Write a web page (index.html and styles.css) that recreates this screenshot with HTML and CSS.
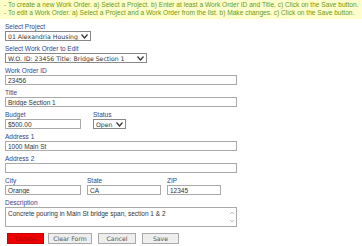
FILE: index.html
```html
<!DOCTYPE html>
<html>
<head>
    <title>Work Orders</title>
    <link rel="stylesheet" href="styles.css">
</head>
<body>
    <div class="help">
        - To create a new Work Order. a) Select a Project. b) Enter at least a Work Order ID and Title. c) Click on the Save button.<br>
        - To edit a Work Order. a) Select a Project and a Work Order from the list. b) Make changes. c) Click on the Save button.
    </div>
    <form class="wo-form">
        <label class="lbl">Select Project</label>
        <select class="sel fld project">
            <option>01 Alexandria Housing</option>
        </select>
        <label class="lbl">Select Work Order to Edit</label>
        <select class="sel fld order">
            <option>W.O. ID: 23456 Title: Bridge Section 1</option>
        </select>
        <label class="lbl">Work Order ID</label>
        <input type="text" class="txt fld wide" value="23456">
        <label class="lbl">Title</label>
        <input type="text" class="txt fld wide" value="Bridge Section 1">
        <div class="row">
            <div class="col">
                <label class="lbl">Budget</label>
                <input type="text" class="txt fld short" value="$500.00">
            </div>
            <div class="col status">
                <label class="lbl">Status</label>
                <select class="sel fld small">
                    <option>Open</option>
                </select>
            </div>
        </div>
        <label class="lbl">Address 1</label>
        <input type="text" class="txt fld wide" value="1000 Main St">
        <label class="lbl">Address 2</label>
        <input type="text" class="txt fld wide" value="">
        <div class="row">
            <div class="col">
                <label class="lbl">City</label>
                <input type="text" class="txt fld short" value="Orange">
            </div>
            <div class="col">
                <label class="lbl">State</label>
                <input type="text" class="txt fld state" value="CA">
            </div>
            <div class="col">
                <label class="lbl">ZIP</label>
                <input type="text" class="txt fld zip" value="12345">
            </div>
        </div>
        <label class="lbl">Description</label>
        <div class="desc-box">
            <textarea class="txt wide desc">Concrete pouring in Main St bridge span, section 1 &amp; 2</textarea>
            <svg class="spin" width="6" height="14" viewBox="0 0 6 14">
                <path d="M1 4 L3 2 L5 4" fill="none" stroke="#aaa" stroke-width="0.8"/>
                <path d="M1 10 L3 12 L5 10" fill="none" stroke="#aaa" stroke-width="0.8"/>
            </svg>
        </div>
        <div class="buttons">
            <button type="button" class="btn red">Delete</button>
            <button type="button" class="btn clear">Clear Form</button>
            <button type="button" class="btn cancel">Cancel</button>
            <button type="button" class="btn save">Save</button>
        </div>
    </form>
</body>
</html>
```

FILE: styles.css
```css
body {
    margin: 0;
    font-family: "Liberation Sans", Arial, sans-serif;
    font-size: 6.5px;
    background: #fff;
}
.help {
    background-color: #ffffcc;
    color: #6a9a10;
    font-size: 6.6px;
    padding: 1px 4px 2px 4px;
    line-height: 8px;
    white-space: nowrap;
}
.wo-form {
    padding: 3px 5px 0 5px;
}
.lbl {
    display: block;
    color: #334488;
    line-height: 9px;
}
.fld {
    margin-bottom: 3px;
}
.sel {
    display: block;
    box-sizing: border-box;
    appearance: none;
    -webkit-appearance: none;
    font-family: "DejaVu Sans", Verdana, sans-serif;
    font-size: 6.2px;
    height: 10px;
    padding: 0 10px 0 2px;
    border: 1px solid #888;
    border-radius: 0;
    background: #fff url("data:image/svg+xml;utf8,<svg xmlns='http://www.w3.org/2000/svg' width='7' height='5' viewBox='0 0 7 5'><path d='M0.5 0.5 L3.5 4 L6.5 0.5' fill='none' stroke='%23333' stroke-width='1.2'/></svg>") no-repeat right 2px center;
    color: #333;
}
.sel.project { width: 86px; }
.sel.order { width: 142px; }
.sel.small { width: 33px; }
.txt {
    display: block;
    box-sizing: border-box;
    font-family: "Liberation Sans", Arial, sans-serif;
    font-size: 6.5px;
    height: 10px;
    padding: 0 2px;
    border: 1px solid #aaa;
    color: #333;
}
.wide { width: 232px; }
.short { width: 76px; }
.state { width: 74px; }
.zip { width: 54px; }
.desc-box {
    position: relative;
    width: 232px;
}
.desc {
    height: 20px;
    resize: none;
    padding: 2px 10px 0 2px;
    overflow: hidden;
}
.spin {
    position: absolute;
    right: 2px;
    top: 3px;
}
.row {
    display: flex;
    gap: 6px;
}
.row .status { margin-left: 6px; }
.buttons {
    display: flex;
    gap: 3px;
    margin-top: 6px;
    padding-left: 2px;
}
.btn {
    box-sizing: border-box;
    font-family: "DejaVu Sans", Verdana, sans-serif;
    font-size: 6.2px;
    height: 11px;
    padding: 0;
    border: 1px solid #aaa;
    border-radius: 0;
    background: #eee;
    color: #555;
}
.btn.red {
    background: #ee0000;
    border-color: #cc0000;
    color: #b00000;
    width: 37px;
}
.btn.clear { width: 44px; margin-left: 1px; }
.btn.cancel { width: 38px; margin-left: 3px; }
.btn.save { width: 37px; margin-left: 3px; }
```
